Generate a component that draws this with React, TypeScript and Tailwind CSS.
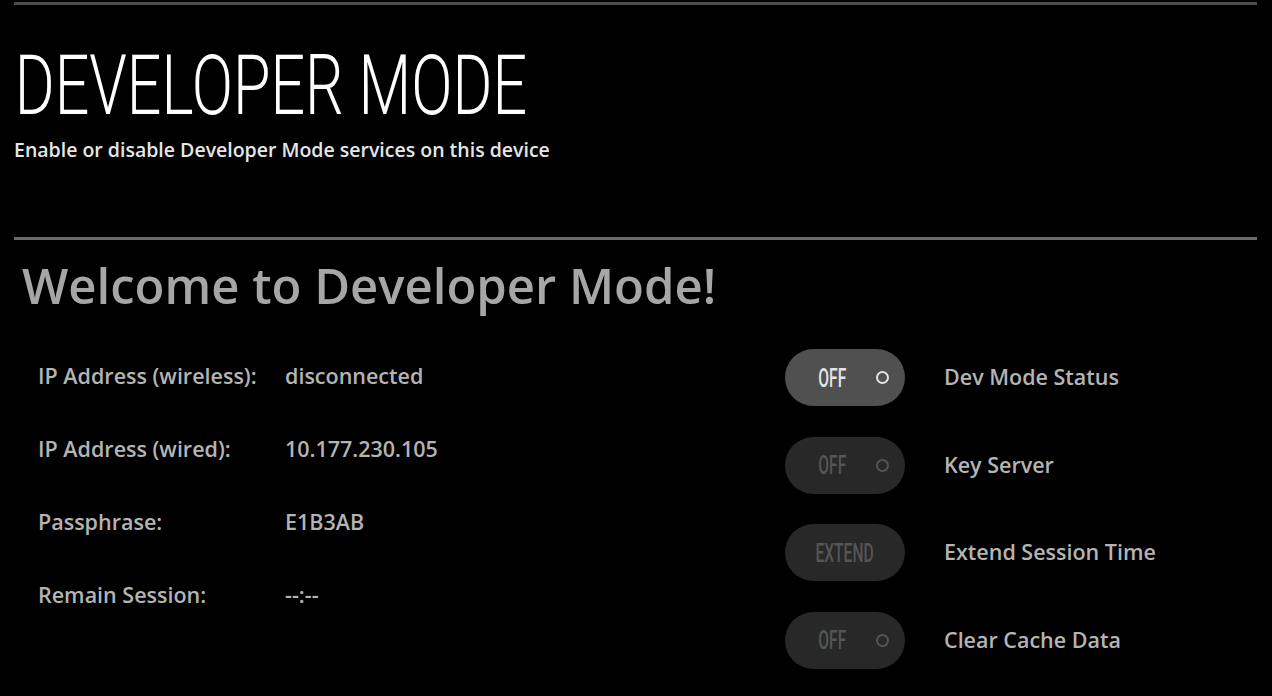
import React from "react";

const info = [
  { label: "IP Address (wireless):", value: "disconnected" },
  { label: "IP Address (wired):", value: "10.177.230.105" },
  { label: "Passphrase:", value: "E1B3AB" },
  { label: "Remain Session:", value: "--:--" },
];

const controls = [
  { text: "OFF", dot: true, active: true, label: "Dev Mode Status" },
  { text: "OFF", dot: true, active: false, label: "Key Server" },
  { text: "EXTEND", dot: false, active: false, label: "Extend Session Time" },
  { text: "OFF", dot: true, active: false, label: "Clear Cache Data" },
];

const narrow = { fontFamily: "Roboto, sans-serif" };

function Pill({ text, dot, active }: { text: string; dot: boolean; active: boolean }) {
  return (
    <div
      className={`w-[120px] h-[57px] rounded-full flex items-center ${
        dot ? "justify-between pl-[32px] pr-[16px]" : "justify-center"
      } ${active ? "bg-[#505050] text-[#e4e4e4]" : "bg-[#282828] text-[#555555]"}`}
    >
      <span className={`flex justify-center ${dot ? "w-[30px]" : "w-[66px]"}`}>
        <span
          className="inline-block shrink-0 text-[26px] leading-none font-medium scale-x-[0.6] origin-center whitespace-nowrap"
          style={narrow}
        >
          {text}
        </span>
      </span>
      {dot && (
        <span
          className={`w-[13px] h-[13px] rounded-full border-[2.5px] ${
            active ? "border-[#e4e4e4]" : "border-[#555555]"
          }`}
        />
      )}
    </div>
  );
}

export default function App() {
  return (
    <div
      className="w-[1272px] h-[696px] bg-black overflow-hidden pl-[14px] pr-[15px] pt-[2px]"
      style={{ fontFamily: '"Open Sans", sans-serif' }}
    >
      <div className="h-[3px] bg-[#4c4c4c]" />
      <h1
        className="mt-[39px] text-[84px] leading-[84px] text-white pl-[1px] font-light whitespace-nowrap inline-block scale-x-[0.725] origin-left"
        style={narrow}
      >
        DEVELOPER MODE
      </h1>
      <p className="mt-[10px] text-[19.5px] font-semibold text-[#e6e6e6] leading-[24px]">
        Enable or disable Developer Mode services on this device
      </p>
      <div className="mt-[75px] h-[3px] bg-[#6a6a6a]" />
      <h2 className="mt-[15px] pl-[8px] text-[49px] font-semibold text-[#a6a6a6] leading-[60px]">
        Welcome to Developer Mode!
      </h2>
      <div className="mt-[26px] flex">
        <div className="w-[771px] pl-[24px] flex flex-col gap-[48px] pt-[22px]">
          {info.map((r) => (
            <div key={r.label} className="flex text-[21.5px] font-semibold text-[#b4b4b4] leading-[25px]">
              <span className="w-[247px]">{r.label}</span>
              <span>{r.value}</span>
            </div>
          ))}
        </div>
        <div className="flex flex-col gap-[30.5px] pt-[8px]">
          {controls.map((c) => (
            <div key={c.label} className="flex items-center gap-[39px]">
              <Pill text={c.text} dot={c.dot} active={c.active} />
              <span className="text-[21.5px] font-semibold text-[#b4b4b4]">{c.label}</span>
            </div>
          ))}
        </div>
      </div>
    </div>
  );
}
